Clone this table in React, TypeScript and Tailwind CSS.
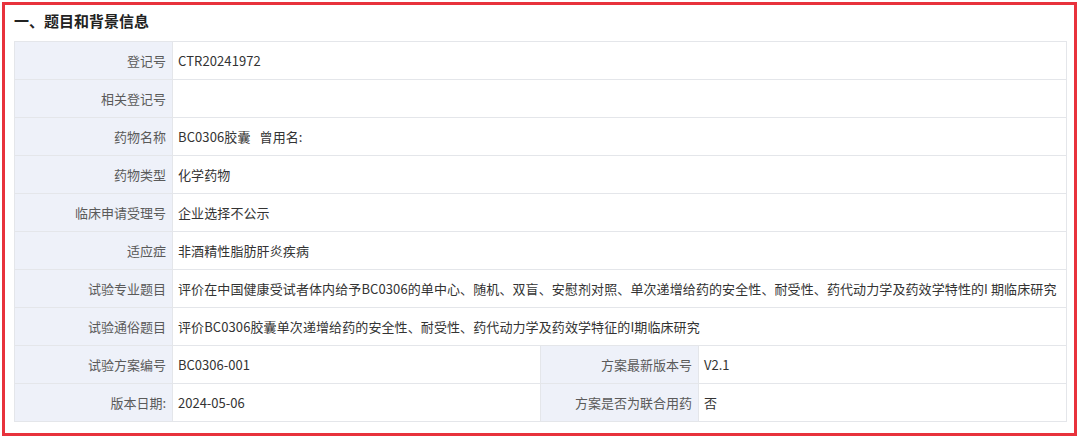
const rows: { label: string; value: string; label2?: string; value2?: string }[] = [
  { label: "登记号", value: "CTR20241972" },
  { label: "相关登记号", value: "" },
  { label: "药物名称", value: "BC0306胶囊\u00a0\u00a0\u00a0曾用名:" },
  { label: "药物类型", value: "化学药物" },
  { label: "临床申请受理号", value: "企业选择不公示" },
  { label: "适应症", value: "非酒精性脂肪肝炎疾病" },
  {
    label: "试验专业题目",
    value:
      "评价在中国健康受试者体内给予BC0306的单中心、随机、双盲、安慰剂对照、单次递增给药的安全性、耐受性、药代动力学及药效学特性的I 期临床研究",
  },
  { label: "试验通俗题目", value: "评价BC0306胶囊单次递增给药的安全性、耐受性、药代动力学及药效学特征的I期临床研究" },
  { label: "试验方案编号", value: "BC0306-001", label2: "方案最新版本号", value2: "V2.1" },
  { label: "版本日期:", value: "2024-05-06", label2: "方案是否为联合用药", value2: "否" },
];

function InfoTable() {
  return (
    <table className="w-[1053px] table-fixed border-collapse text-[13px]">
      <colgroup>
        <col className="w-[158px]" />
        <col className="w-[368px]" />
        <col className="w-[158px]" />
        <col />
      </colgroup>
      <tbody>
        {rows.map((r) => (
          <tr key={r.label} className="h-[38px]">
            <td className="border border-[#e4e6ea] bg-[#eef1f9] pr-[6px] text-right text-[#5a5a5a]">{r.label}</td>
            {r.label2 ? (
              <>
                <td className="border border-[#e4e6ea] pl-[5px] text-[#333]">{r.value}</td>
                <td className="border border-[#e4e6ea] bg-[#eef1f9] pr-[6px] text-right text-[#5a5a5a]">{r.label2}</td>
                <td className="border border-[#e4e6ea] pl-[5px] text-[#333]">{r.value2}</td>
              </>
            ) : (
              <td colSpan={3} className="whitespace-nowrap border border-[#e4e6ea] pl-[5px] tracking-[0.1px] text-[#333]">
                {r.value}
              </td>
            )}
          </tr>
        ))}
      </tbody>
    </table>
  );
}

export default function App() {
  return (
    <div className="h-[440px] w-[1080px] bg-white p-[2px] font-['Microsoft_YaHei','Noto_Sans_CJK_SC',sans-serif]">
      <div className="h-[434px] w-[1075px] border-[3px] border-[#e8323c] pl-[9px] pt-[1px]">
        <h2 className="h-[35px] text-[15px] font-bold leading-[30px] text-[#222]">一、题目和背景信息</h2>
        <InfoTable />
      </div>
    </div>
  );
}
